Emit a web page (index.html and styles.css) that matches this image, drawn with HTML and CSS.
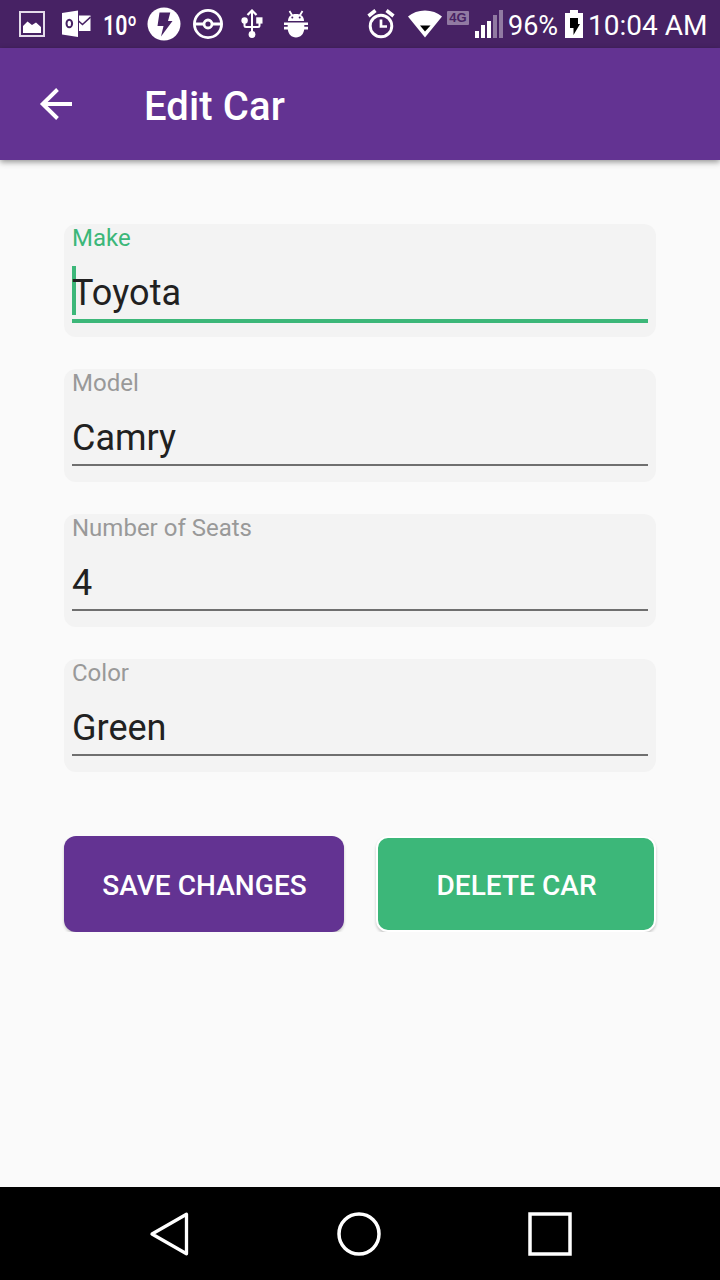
FILE: index.html
```html
<!DOCTYPE html>
<html lang="en">
<head>
<meta charset="utf-8">
<title>Edit Car</title>
<link rel="stylesheet" href="styles.css">
</head>
<body>
<div class="screen">
  <div class="status">
    <div class="status-left">
      <svg width="26" height="26" viewBox="0 0 26 26"><rect x="1" y="1" width="24" height="24" fill="none" stroke="#e4dcea" stroke-width="2"/><path d="M4 22v-7l4.500-4.500L13 14l4-2.500 5 4.500v6z" fill="#fff"/></svg>
      <svg class="outlook" width="29" height="28" viewBox="0 0 29 28"><path d="M0 3L16 0.500v26.500L0 24.500z" fill="#fff"/><ellipse cx="7.300" cy="13.500" rx="2.800" ry="3.800" fill="none" stroke="#472264" stroke-width="2"/><path d="M17 5.500h11.500v15.500H17z" fill="#fff"/><path d="M16.500 11l4 3.500L28.500 7" fill="none" stroke="#472264" stroke-width="1.600"/></svg>
      <svg class="temp" width="36" height="38" viewBox="0 0 36 38"><text class="temp-text" x="0" y="30" textLength="34" lengthAdjust="spacingAndGlyphs">10º</text></svg>
      <svg class="bolt" width="34" height="34" viewBox="0 0 34 34"><circle cx="17" cy="17" r="16.500" fill="#fff"/><path d="M12.500 5.500h10.800L21 14h4.500L14 29.500l2.500-10.500h-6z" fill="#472264"/></svg>
      <svg class="ball" width="30" height="30" viewBox="0 0 30 30" fill="none" stroke="#fff"><circle cx="15" cy="15" r="13.600" stroke-width="2.800"/><circle cx="15" cy="15" r="4" stroke-width="2.800"/><path d="M1 15h10M19 15h10" stroke-width="3"/></svg>
      <svg class="usb" width="22" height="30" viewBox="0 0 22 30"><path d="M11 24V3M3.500 12v4.500q0 1.500 1.500 1.500h12q1.500 0 1.500-1.500V12" fill="none" stroke="#fff" stroke-width="2"/><path d="M6.500 6L11 1.500l4.500 4.500" fill="none" stroke="#fff" stroke-width="2.200"/><circle cx="3.600" cy="11.500" r="3.200" fill="#fff"/><path d="M15.200 8.300h6.300v6.300h-6.300z" fill="#fff"/><circle cx="11" cy="25.500" r="3.400" fill="#fff"/></svg>
      <svg class="bug" width="24" height="28" viewBox="0 0 24 28"><path d="M4 11C4 6.500 7 4 12 4s8 2.500 8 7z" fill="#fff"/><path d="M5.500 1l2.700 4.500M18.500 1l-2.700 4.500" stroke="#fff" stroke-width="1.800"/><circle cx="8.300" cy="7.600" r="1" fill="#472264"/><circle cx="15.700" cy="7.600" r="1" fill="#472264"/><path d="M0 12.500h24v2.400h-3.700v1.900H24v2.800h-3.800C19.500 24.500 16.500 27.500 12 27.500s-7.500-3-8.200-7.900H0v-2.800h3.700v-1.900H0z" fill="#fff"/></svg>
    </div>
    <div class="status-right">
      <svg width="28" height="30" viewBox="0 0 28 30" fill="none" stroke="#fff"><circle cx="14" cy="17" r="10.800" stroke-width="2.900"/><path d="M14 10.500v7h6" stroke-width="2.700"/><path d="M1.500 7l7-5.500M26.500 7l-7-5.500" stroke-width="3.600"/></svg>
      <svg class="wifi" width="34" height="28" viewBox="0 0 34 28"><path d="M0 6.500Q7 0.500 17 0.500T34 6.500L17 27.500z" fill="#fff"/><path d="M12 15.500h10.500L17 21.500z" fill="#000"/></svg>
      <span class="network">4G</span>
      <svg class="signal" width="28" height="28" viewBox="0 0 28 28"><path d="M0 21h4v7H0zM6 15h4v13H6zM12 11h4v17h-4z" fill="#fff"/><path d="M18 5h4v23h-4zM24 0h4v28h-4z" fill="#917aa2"/></svg>
      <span class="percent">96%</span>
      <svg class="battery" width="18" height="28" viewBox="0 0 18 28"><path d="M5 0h8v3h5v25H0V3h5z" fill="#fff"/><path d="M5 8h8v6h2L8.500 25V18H5z" fill="#000"/></svg>
      <span class="time">10:04 AM</span>
    </div>
  </div>
  <header class="appbar">
    <svg class="back" width="34" height="34" viewBox="0 0 34 34" fill="none" stroke="#fff" stroke-width="3.900"><path d="M33 17H4M18.500 2.500L3.700 17l14.800 14.500"/></svg>
    <h1 class="title">Edit Car</h1>
  </header>
  <main class="content">
    <div class="field focused">
      <div class="label">Make</div>
      <div class="value"><span class="caret"></span><span class="text">Toyota</span></div>
    </div>
    <div class="field">
      <div class="label">Model</div>
      <div class="value">Camry</div>
    </div>
    <div class="field">
      <div class="label">Number of Seats</div>
      <div class="value">4</div>
    </div>
    <div class="field">
      <div class="label">Color</div>
      <div class="value">Green</div>
    </div>
    <div class="actions">
      <div class="clip"><button class="button save">SAVE CHANGES</button></div>
      <div class="clip"><button class="button delete">DELETE CAR</button></div>
    </div>
  </main>
  <nav class="navbar">
    <svg width="40" height="46" viewBox="0 0 40 46"><path d="M37.500 3.200v39.600L3 23z" fill="none" stroke="#fff" stroke-width="3.300" stroke-linejoin="round"/></svg>
    <svg class="home" width="44" height="44" viewBox="0 0 44 44"><circle cx="22" cy="22" r="20" fill="none" stroke="#fff" stroke-width="3.500"/></svg>
    <svg class="recent" width="44" height="44" viewBox="0 0 44 44"><rect x="2" y="2" width="40" height="40" fill="none" stroke="#fff" stroke-width="3.500"/></svg>
  </nav>
</div>
</body>
</html>
```
FILE: styles.css
```css
* { box-sizing: border-box; }
body { margin: 0; font-family: Roboto, sans-serif; background: #fafafa; }
svg { display: block; flex: none; }
.screen { width: 720px; height: 1280px; display: flex; flex-direction: column; overflow: hidden; }

.status { height: 48px; flex: none; background: #472264; display: flex; justify-content: space-between; color: #fff; padding-left: 19px; padding-right: 13px; }
.status-left, .status-right { display: flex; align-items: center; white-space: nowrap; }
.outlook { margin-left: 17px; }
.temp { margin-left: 12px; overflow: visible; }
.temp-text { font-family: Roboto, sans-serif; font-size: 27px; font-weight: 600; fill: #fff; }
.bolt { margin-left: 8px; }
.ball { margin-left: 12px; }
.usb { margin-left: 18px; }
.bug { margin-left: 21px; }
.wifi { margin-left: 13px; }
.network { width: 22px; height: 14px; margin-left: 5px; margin-bottom: 12px; background: #917aa2; color: #472264; font: bold 13px/14px "Liberation Sans", sans-serif; text-align: center; border-radius: 1px; }
.signal { margin-left: 6px; }
.percent { width: 50px; margin-left: 5px; font-size: 27px; line-height: 48px; padding-top: 3px; }
.battery { margin-left: 7px; }
.time { width: 119px; margin-left: 5px; font-size: 28px; line-height: 48px; padding-top: 3px; }

.appbar { height: 112px; flex: none; background: #633392; display: flex; align-items: center; padding-left: 39px; box-shadow: 0 2px 6px rgba(0, 0, 0, .42); color: #fff; }
.title { margin: 6px 0 0 71px; font-size: 40px; line-height: 48px; font-weight: 500; letter-spacing: .12px; }

.content { flex: 1; padding: 64px 64px 0; display: flex; flex-direction: column; gap: 32px; }
.field { height: 113px; flex: none; background: #f3f3f3; border-radius: 12px; padding: 0 8px; }
.label { font-size: 24px; line-height: 28px; color: #999; }
.value { position: relative; margin-top: 14px; height: 55px; border-bottom: 2px solid #6f6f6f; font-size: 36px; line-height: 54px; color: #212121; }
.focused .label { color: #3cb779; }
.focused .value { height: 57px; border-bottom: 4px solid #3cb779; }
.caret { position: absolute; left: 0; top: 0; width: 4px; height: 49px; background: #3cb779; }
.text { position: relative; letter-spacing: .1px; }

.actions { display: grid; grid-template-columns: 1fr 1fr; gap: 32px; margin-top: 32px; }
.clip { height: 96px; clip-path: inset(0 -3px 0 -3px); }
.button { display: block; width: 100%; height: 96px; padding: 2px 0 0 1px; border: 0; border-radius: 12px; font: 500 28px Roboto, sans-serif; letter-spacing: .05px; color: #fff; text-align: center; box-shadow: 0 2px 3px rgba(0, 0, 0, .2); }
.save { background: #633392; }
.delete { background: #3cb779; border: 2px solid #fff; }

.navbar { height: 93px; flex: none; background: #000; display: flex; align-items: center; padding-left: 149px; }
.home { margin-left: 148px; }
.recent { margin-left: 147px; }
```
